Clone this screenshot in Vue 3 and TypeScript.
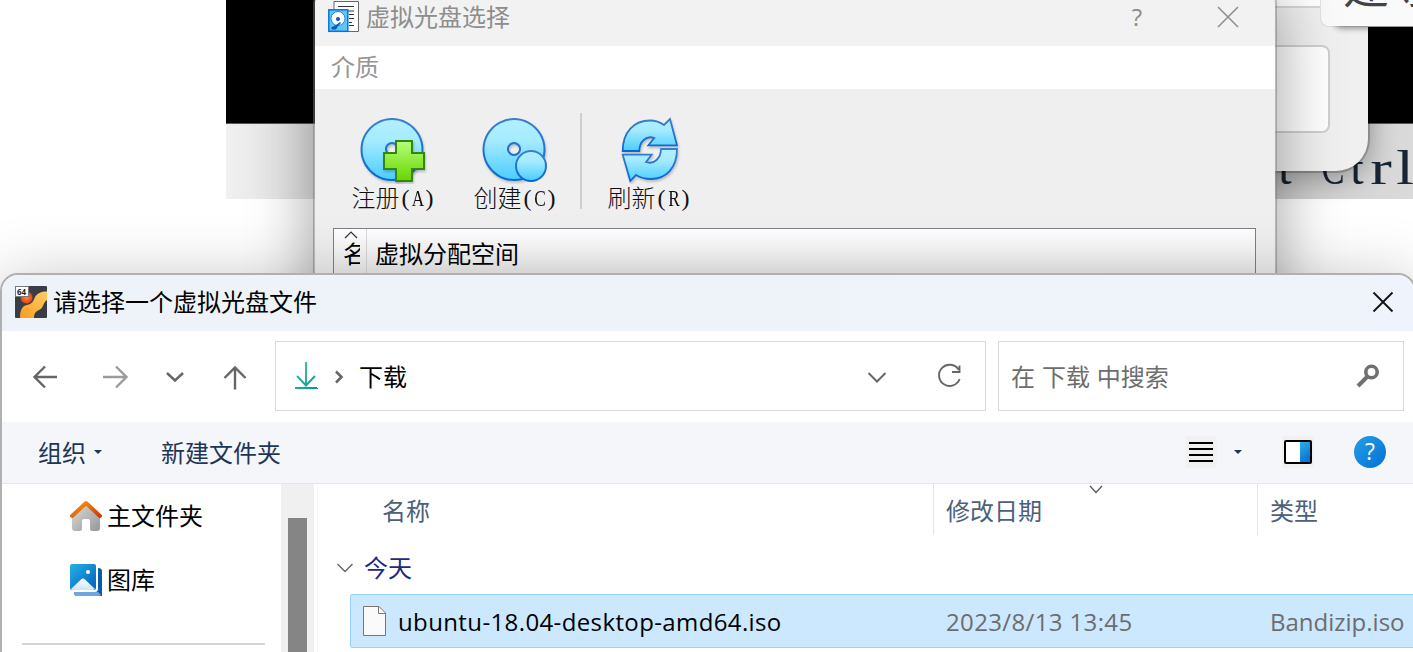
<script setup lang="ts">
interface Tool {
  id: string
  label: string
  key: string
}

const tools: Tool[] = [
  { id: 'add', label: '注册', key: '(A)' },
  { id: 'create', label: '创建', key: '(C)' },
  { id: 'refresh', label: '刷新', key: '(R)' },
]

const terminalText: string[] = [...'t Ctrl']

const file = {
  name: 'ubuntu-18.04-desktop-amd64.iso',
  date: '2023/8/13 13:45',
  type: 'Bandizip.iso',
}
</script>

<template>
  <div class="desktop">
    <div class="terminal">
      <div class="screen"></div>
      <div class="status">
        <span v-for="(c, i) in terminalText" :key="i" :class="{ wide: c === 'C', thin: c === 'r' || c === 'l' }">{{ c }}</span>
      </div>
    </div>
    <div class="panel">
      <div class="panel-top"></div>
      <div class="panel-box"></div>
    </div>
    <div class="tip"><span>建导</span></div>

    <section class="win media">
      <header class="media-title">
        <svg class="media-logo" width="32" height="33" viewBox="0 0 32 33">
          <path d="M6 1.5H30.5V31.5H6z" fill="#fff" stroke="#666" />
          <path d="M10 6.5H26M18 11H26M21 14.5H26M21 18.5H26M21 22.5H24M21 25.5H26" stroke="#333" fill="none" />
          <rect x=".8" y="9.8" width="19" height="21.5" fill="#5cc8fa" stroke="#0b74d8" stroke-width="1.5" />
          <circle cx="10" cy="18.5" r="7" fill="#fff" stroke="#2b84d8" />
          <circle cx="10" cy="19" r="2" fill="#0a58b0" />
          <path d="M12 22L8 25L3 27.5L4 29.5H8L10 26L13 23z" fill="#0b5cbb" />
        </svg>
        <h1>虚拟光盘选择</h1>
        <span class="q">?</span>
        <svg class="media-x" width="22" height="22" viewBox="0 0 22 22">
          <path d="M1 1L21 21M21 1L1 21" stroke="#8f8f8f" stroke-width="1.6" />
        </svg>
      </header>
      <nav class="menu">介质</nav>
      <div class="tools">
        <div v-for="t in tools" :key="t.id" class="tool" :class="t.id">
          <svg width="70" height="68" viewBox="0 0 70 68">
            <defs>
              <linearGradient id="blue" x1="0" y1="0" x2="0" y2="1">
                <stop offset="0" stop-color="#b2f0ff" />
                <stop offset=".35" stop-color="#a5ebff" />
                <stop offset="1" stop-color="#4acdff" />
              </linearGradient>
              <linearGradient id="edge" x1="0" y1="0" x2="0" y2="1">
                <stop offset="0" stop-color="#3a7dd0" />
                <stop offset="1" stop-color="#0768d6" />
              </linearGradient>
              <linearGradient id="green" x1="0" y1="0" x2="0" y2="1">
                <stop offset="0" stop-color="#b4ff76" />
                <stop offset="1" stop-color="#68d500" />
              </linearGradient>
            </defs>
            <g v-if="t.id !== 'refresh'" stroke="url(#edge)" stroke-width="2" class="lift">
              <path
                d="M35 3a30.5 30.5 0 1 0 .01 0zM35 27a6 6 0 1 1-.01 0z"
                fill="url(#blue)"
                fill-rule="evenodd"
              />
            </g>
            <path
              v-if="t.id === 'add'"
              class="lift"
              d="M39 25H55V37H67V53H55V65H39V53H27V37H39z"
              fill="url(#green)"
              stroke="#33870c"
              stroke-width="2"
            />
            <circle
              v-if="t.id === 'create'"
              cx="52"
              cy="50"
              r="15"
              fill="url(#blue)"
              stroke="url(#edge)"
              stroke-width="2"
            />
            <g v-if="t.id === 'refresh'" fill="url(#blue)" stroke="url(#edge)" stroke-width="1.8" class="lift">
              <path d="M8.700 35C8.700 16 20 4.500 36 4.500C42 4.500 46 6 50 9L56 3L63 29.300H34.300L40.300 22C32 19 25.300 26 25.300 35z" />
              <path d="M63 33C63 52 52 63 37 63C30 63 26 61.500 22 59L16.300 65L8.700 38.700H37.700L32 46C40 49 47 42 47 33z" />
            </g>
          </svg>
          <div class="tool-label">
            <b>{{ t.label }}</b>
            <i v-for="(c, i) in t.key" :key="i" :class="{ wide: i === 1 }">{{ c }}</i>
          </div>
        </div>
      </div>
      <div class="grid">
        <div class="col-name">
          <svg width="16" height="9" viewBox="0 0 16 9">
            <path d="M2 8L8 2L14 8" fill="none" stroke="#333" stroke-width="1.2" />
          </svg>
          <span>名</span>
        </div>
        <div class="col-size">虚拟分配空间</div>
      </div>
    </section>

    <section class="win picker">
      <header class="picker-title">
        <svg class="app-logo" width="32" height="32" viewBox="0 0 32 32">
          <defs>
            <linearGradient id="flame" x1="1" y1="0" x2="0" y2="1">
              <stop offset="0" stop-color="#ffcf62" />
              <stop offset="1" stop-color="#f99a23" />
            </linearGradient>
            <radialGradient id="ball">
              <stop offset="0" stop-color="#ff8a3c" />
              <stop offset="1" stop-color="#e84010" />
            </radialGradient>
          </defs>
          <rect width="32" height="32" rx="1" fill="#393d48" />
          <path d="M32 5.500C26 5.500 22 7.500 20 11C18.500 15 17 18 12 19C7 20 5 24 5 32H19C19 27 21 25.500 24 24C29 22 28 16 32 14z" fill="url(#flame)" />
          <circle cx="11.500" cy="11.500" r="6" fill="url(#ball)" />
          <rect x=".5" y=".5" width="13" height="10" fill="#fff" stroke="#777" />
          <text x="2" y="8.5" font-size="8" font-weight="bold" font-family="Open Sans, sans-serif" fill="#222">64</text>
        </svg>
        <h2>请选择一个虚拟光盘文件</h2>
        <svg class="picker-x" width="22" height="22" viewBox="0 0 22 22">
          <path d="M1.5 1.5L20.5 20.5M20.5 1.5L1.5 20.5" stroke="#111" stroke-width="1.8" />
        </svg>
      </header>

      <div class="nav">
        <svg class="arrows" width="273" height="91" viewBox="0 0 273 91" fill="none" stroke="#666" stroke-width="2.4">
          <path d="M55 46H33M43 35.500L32.500 46L43 56.500" />
          <path d="M101 46H123M114 35.500L124.500 46L114 56.500" stroke="#9b9b9b" />
          <path d="M165 42L173 49.500L181 42" />
          <path d="M233 58.500V37M222.500 47L233 36.500L243.500 47" />
        </svg>
        <div class="address">
          <svg width="58" height="68" viewBox="0 0 58 68" fill="none">
            <defs>
              <linearGradient id="dl" x1="18" y1="20" x2="42" y2="48" gradientUnits="userSpaceOnUse">
                <stop offset="0" stop-color="#37cf8c" />
                <stop offset="1" stop-color="#08979c" />
              </linearGradient>
            </defs>
            <g transform="translate(0 -1)" stroke="url(#dl)">
              <path d="M30 21V44M21 35L30 44.500L39 35" stroke-width="1.900" />
              <path d="M19 47H41L41 46.900" stroke-width="2" />
            </g>
          </svg>
          <svg class="sep" width="10" height="14" viewBox="0 0 10 14" fill="none">
            <path d="M2 1.500L7.500 7L2 12.500" stroke="#666" stroke-width="2.600" />
          </svg>
          <span>下载</span>
          <svg class="addr-tools" width="120" height="68" viewBox="0 0 120 68" fill="none" stroke="#666" stroke-width="2">
            <path d="M2.500 31L11 39.500L19.500 31" />
            <path d="M92.500 27.500A10.600 10.600 0 1 0 93.600 37M93.500 23.500V30H86" stroke-width="1.900" />
          </svg>
        </div>
        <div class="search">
          <span>在 下载 中搜索</span>
          <svg width="24" height="24" viewBox="0 0 24 24" fill="none" stroke="#707070">
            <circle cx="15.500" cy="8" r="5.700" stroke-width="3.600" />
            <path d="M11.500 12.500L2 22" stroke-width="4" />
          </svg>
        </div>
      </div>

      <div class="bar">
        <span>组织</span>
        <i class="caret"></i>
        <span class="new">新建文件夹</span>
        <div class="view">
          <svg width="32" height="32" viewBox="0 0 32 32">
            <rect width="32" height="32" rx="4" fill="#f1f1f1" />
            <path d="M4 7H28M4 13H28M4 19H28M4 25H28" stroke="#000" stroke-width="2" />
          </svg>
        </div>
        <i class="caret view-caret"></i>
        <svg class="preview" width="32" height="32" viewBox="0 0 32 32">
          <defs>
            <linearGradient id="pane" x1="0" y1="0" x2=".4" y2="1">
              <stop offset="0" stop-color="#2bb1ea" />
              <stop offset="1" stop-color="#0975d5" />
            </linearGradient>
          </defs>
          <rect width="32" height="32" rx="4" fill="#f1f1f1" />
          <rect x="3" y="5" width="26" height="22" rx="1" fill="#fff" stroke="#000" stroke-width="2" />
          <rect x="18" y="6" width="10" height="20" fill="url(#pane)" />
        </svg>
        <div class="help">?</div>
      </div>

      <div class="content">
        <aside>
          <div class="place">
            <svg width="32" height="32" viewBox="0 0 32 32">
              <defs>
                <linearGradient id="roof" x1="0" y1="0" x2="1" y2="1">
                  <stop offset="0" stop-color="#ff9a0a" />
                  <stop offset="1" stop-color="#ca3d08" />
                </linearGradient>
                <linearGradient id="wall" x1="0" y1="0" x2="1" y2="1">
                  <stop offset="0" stop-color="#ddd" />
                  <stop offset="1" stop-color="#979797" />
                </linearGradient>
              </defs>
              <path
                d="M2 15L16 3L30 15V28Q30 31 27 31H22Q20 31 20 29V21Q20 19 18 19H14Q12 19 12 21V29Q12 31 10 31H5Q2 31 2 28z"
                fill="url(#wall)"
              />
              <path d="M2 16L16 3L30 16" fill="none" stroke="url(#roof)" stroke-width="4" stroke-linecap="round" stroke-linejoin="round" />
            </svg>
            <span>主文件夹</span>
          </div>
          <div class="place">
            <svg width="32" height="32" viewBox="0 0 32 32">
              <defs>
                <linearGradient id="sky" x1="0" y1="0" x2="1" y2="1">
                  <stop offset="0" stop-color="#22b0ea" />
                  <stop offset="1" stop-color="#075fb9" />
                </linearGradient>
                <linearGradient id="snow" x1="0" y1="0" x2="0" y2="1">
                  <stop offset="0" stop-color="#fff" />
                  <stop offset="1" stop-color="#cce5fa" />
                </linearGradient>
              </defs>
              <path d="M28 4Q32 4 32 7V32H7Q4 32 4 28H25Q28 28 28 25z" fill="#0a5cae" />
              <path d="M4 28H28L31 31Q30 32 28 32H7Q4 32 4 28z" fill="#71a6dc" />
              <rect width="26" height="26" rx="2" fill="url(#sky)" />
              <path d="M1 25L11 15.500Q13 13.500 15 15.500L25 25Q24 26 23 26H3Q1.500 26 1 25z" fill="url(#snow)" />
              <circle cx="18" cy="8" r="2" fill="#fff" />
            </svg>
            <span>图库</span>
          </div>
          <hr />
        </aside>
        <div class="scroll"><div class="thumb"></div></div>
        <main>
          <div class="heads">
            <div class="h-name">名称</div>
            <div class="h-date">
              修改日期
              <svg width="14" height="9" viewBox="0 0 14 9">
                <path d="M1 1L7 7.500L13 1" fill="none" stroke="#555" stroke-width="1.200" />
              </svg>
            </div>
            <div class="h-type">类型</div>
          </div>
          <div class="group">
            <svg width="18" height="10" viewBox="0 0 18 10">
              <path d="M1.500 1L9 8.500L16.500 1" fill="none" stroke="#666" stroke-width="1.400" />
            </svg>
            <span>今天</span>
          </div>
          <div class="row">
            <svg width="24" height="32" viewBox="0 0 24 32">
              <path d="M.5 1.500H16L22.500 8V30.500H.5z" fill="#fafafa" stroke="#777" />
              <path d="M15.500 1.500V8.500H22.500" fill="none" stroke="#777" />
            </svg>
            <span class="f-name">{{ file.name }}</span>
            <span class="f-date">{{ file.date }}</span>
            <span class="f-type">{{ file.type }}</span>
          </div>
        </main>
      </div>
    </section>
  </div>
</template>

<style>
body {
  margin: 0;
  overflow: hidden;
}
</style>

<style scoped>
.desktop {
  position: relative;
  width: 1413px;
  height: 652px;
  overflow: hidden;
  background: #fff;
  font-family: 'Open Sans', 'Noto Sans CJK SC', sans-serif;
  font-size: 24px;
  white-space: nowrap;
}
.desktop * {
  box-sizing: border-box;
}
svg {
  display: block;
  flex: none;
}
i,
b {
  font-style: normal;
  font-weight: 400;
}
h1,
h2 {
  margin: 0;
  font-size: 24px;
  font-weight: 400;
}
.terminal {
  position: absolute;
  left: 226px;
  right: 0;
  top: 0;
  height: 199px;
}
.screen {
  height: 124px;
  background: #000;
  border-bottom: 1px solid #555;
}
.status {
  height: 75px;
  background: linear-gradient(90deg, #f0f0f0, #e1e1e1 90px, #cfcfcf 1050px, #dadada);
  padding-left: 1047px;
  display: flex;
  font: 48px/88px 'Liberation Serif', serif;
  color: #182535;
}
.status span {
  width: 24px;
  flex: none;
  display: flex;
  justify-content: center;
}
.wide {
  transform: scaleX(0.72);
}
.thin {
  transform: scaleX(1.35);
}
.panel {
  position: absolute;
  left: 1200px;
  top: -40px;
  width: 168px;
  height: 211px;
  border-radius: 0 0 32px 0;
  background: #f0f0f0;
  box-shadow: 0 0 0 2px #0003, 2px 6px 28px #0005;
}
.panel-top {
  height: 48px;
  background: #fff;
  border-bottom: 2px solid #d5d5d5;
}
.panel-box {
  margin-top: 37px;
  width: 130px;
  height: 88px;
  border: 2px solid #cfcfcf;
  border-radius: 8px;
  background: #fff;
}
.tip {
  position: absolute;
  left: 1321px;
  top: -40px;
  width: 120px;
  height: 66px;
  border-radius: 0 0 0 8px;
  background: #fafafa;
  box-shadow: 12px 4px 6px -2px #0007, -1px 1px 0 #e2e2e2;
  padding-left: 22px;
  font: 400 46px/46px 'Noto Sans CJK SC', sans-serif;
  color: #444;
}
.win {
  position: absolute;
}
.media {
  left: 313px;
  top: -12px;
  width: 964px;
  height: 500px;
  border: 2px solid rgba(120, 120, 120, 0.5);
  border-radius: 16px;
  background: #efefef;
  background-clip: padding-box;
  box-shadow: 0 8px 64px rgba(0, 0, 0, 0.38);
}
.media-title {
  height: 56px;
  margin-top: 0;
  display: flex;
  align-items: flex-start;
  background: #f2f2f2;
  border-radius: 14px 14px 0 0;
  padding: 10px 36px 0 13px;
  color: #8d8d8d;
}
.media-title h1 {
  margin-left: 6px;
  line-height: 33px;
}
.q {
  margin-left: auto;
  width: 22px;
  text-align: center;
  line-height: 34px;
}
.media-x {
  margin: 6px 0 0 69px;
}
.menu {
  height: 43px;
  line-height: 42px;
  padding-left: 16px;
  background: #fff;
  color: #959595;
}
.tools {
  height: 139px;
  display: flex;
  padding-top: 27px;
}
.tool {
  display: flex;
  flex-direction: column;
  align-items: center;
  width: 122px;
  margin-left: 17px;
}
.tool + .tool {
  margin-left: 0;
}
.tool svg {
  margin-right: 2px;
}
.tool.create {
  width: 128px;
  padding-right: 6px;
  position: relative;
}
.tool.create::after {
  content: '';
  position: absolute;
  right: 0;
  top: -3px;
  width: 2px;
  height: 96px;
  background: #cfcfcf;
}
.tool.refresh {
  width: 134px;
}
.tool.refresh svg {
  margin-right: 0;
}
.lift {
  filter: drop-shadow(1px 2px 1px #0003);
}
.tool-label {
  display: flex;
  height: 32px;
  margin-top: -2px;
  margin-left: 1px;
  line-height: 32px;
  color: #111;
}
.tool-label b {
  font-weight: 300;
}
.tool-label i {
  width: 12px;
  display: flex;
  justify-content: center;
  font-family: 'Liberation Serif', serif;
}
.grid {
  width: 923px;
  margin-left: 18px;
  height: 300px;
  border: 1px solid #7b7f87;
  background: linear-gradient(#fff, #ececec 47px, #fff 48px);
  display: flex;
  color: #000;
}
.col-name {
  width: 33px;
  height: 46px;
  border-right: 1px solid #d8d8d8;
  padding-left: 9px;
}
.col-name svg {
  margin-top: 1px;
}
.col-name span {
  display: block;
  width: 17px;
  height: 30px;
  line-height: 30px;
  overflow: hidden;
}
.col-size {
  padding-left: 8px;
  line-height: 50px;
}
.picker {
  left: 0;
  top: 273px;
  width: 1416px;
  height: 500px;
  border: 2px solid #b0b0b0;
  border-radius: 18px;
  background: #fff;
  box-shadow: 0 8px 64px rgba(0, 0, 0, 0.25);
}
.picker-title {
  height: 56px;
  display: flex;
  align-items: center;
  padding: 0 20px 2px 13px;
  background: linear-gradient(90deg, #edf3f8, #eff3fb);
  border-radius: 16px 16px 0 0;
}
.picker-title h2 {
  margin-left: 6px;
  line-height: 54px;
  padding-bottom: 1px;
}
.picker-x {
  margin: 0 0 0 auto;
}
.nav {
  height: 91px;
  display: flex;
  align-items: center;
}
.address {
  width: 711px;
  height: 70px;
  margin-bottom: 1px;
  border: 1px solid #d9d9d9;
  display: flex;
  align-items: center;
}
.address span {
  padding-bottom: 1px;
}
.sep {
  margin: 2px 15px 0 0;
}
.addr-tools {
  margin-left: auto;
  margin-right: -1px;
}
.search {
  margin-left: 12px;
  margin-bottom: 1px;
  width: 406px;
  height: 70px;
  border: 1px solid #d9d9d9;
  display: flex;
  align-items: center;
  justify-content: space-between;
  padding: 0 23px 0 12px;
  color: #6d6d6d;
}
.search span {
  padding-bottom: 1px;
  word-spacing: 0.7px;
}
.bar {
  height: 62px;
  background: #f4f6f9;
  border-bottom: 1px solid #e5e7ea;
  display: flex;
  align-items: center;
  padding: 0 0 2px 36px;
  color: #1d3557;
}
.bar > span {
  padding-bottom: 1px;
}
.caret {
  border: 4px solid transparent;
  border-top-color: #1d3557;
  border-bottom: 0;
  margin-left: 8px;
}
.new {
  margin-left: 59px;
}
.view {
  margin-left: 904px;
}
.view-caret {
  margin-left: 17px;
}
.preview {
  margin-left: 40px;
}
.help {
  margin-left: 40px;
  width: 32px;
  height: 32px;
  border-radius: 50%;
  background: linear-gradient(135deg, #259fe6, #0470d5);
  color: #fff;
  text-align: center;
  line-height: 31px;
  font-size: 23px;
}
.content {
  display: flex;
  height: 200px;
}
aside {
  width: 279px;
  flex: none;
}
.place {
  height: 64px;
  display: flex;
  align-items: center;
  padding-left: 68px;
  gap: 5px;
}
.place span {
  padding-bottom: 3px;
}
aside hr {
  width: 243px;
  height: 2px;
  border: 0;
  background: #d5d5d5;
  margin: 31px 0 0 20px;
}
.scroll {
  width: 33px;
  flex: none;
  background: #f0f0f0;
  padding: 34px 7px 0;
}
.thumb {
  height: 170px;
  background: #858585;
}
main {
  margin-left: 3px;
  flex: 1;
  min-width: 0;
  border-left: 1px solid #f5f5f5;
}
.heads {
  display: flex;
  height: 51px;
  line-height: 53px;
  color: #4c607a;
}
.h-name {
  width: 616px;
  flex: none;
  padding-left: 64px;
  border-right: 1px solid #e5e5e5;
}
.h-date {
  width: 324px;
  flex: none;
  padding-left: 12px;
  border-right: 1px solid #e5e5e5;
  position: relative;
}
.h-date svg {
  position: absolute;
  left: 155px;
  top: 1px;
}
.h-type {
  padding-left: 12px;
}
.group {
  height: 59px;
  display: flex;
  align-items: center;
  padding: 7px 0 0 18px;
  gap: 10px;
  color: #1b2a86;
}
.group span {
  padding-bottom: 3px;
}
.row {
  margin-left: 32px;
  width: 1100px;
  height: 54px;
  background: #cce8ff;
  border: 1px solid #99d1ff;
  border-radius: 2px;
  display: flex;
  align-items: center;
  padding-left: 12px;
  color: #6d6d6d;
}
.f-name {
  margin-left: 11px;
  width: 548px;
  color: #000;
  letter-spacing: 0.38px;
}
.f-date {
  width: 324px;
  letter-spacing: 0.36px;
}
</style>
